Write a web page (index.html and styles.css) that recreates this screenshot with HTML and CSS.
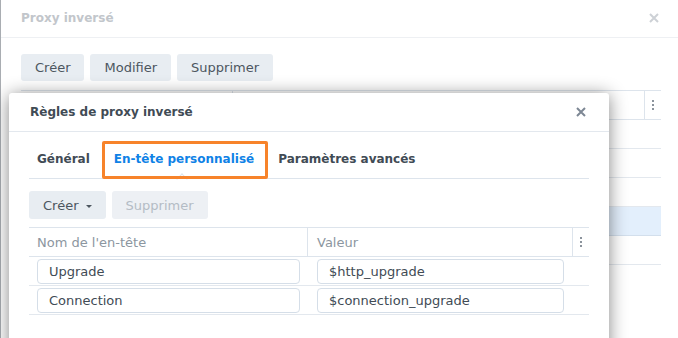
FILE: index.html
```html
<!DOCTYPE html>
<html lang="fr">
<head>
  <meta charset="UTF-8">
  <meta name="viewport" content="width=device-width, initial-scale=1.0">
  <title>Proxy inversé</title>
  <link rel="stylesheet" href="styles.css">
</head>
<body>

  <div class="screen">
    <!-- Background window -->
    <div class="window">
      <div class="win-header">
        <span class="win-title">Proxy inversé</span>
        <svg class="win-close" width="10" height="10" viewBox="0 0 10 10"><path d="M1 1L9 9M9 1L1 9" stroke="#cdd1d6" stroke-width="2"/></svg>
      </div>
      <div class="win-toolbar">
        <button class="btn">Créer</button>
        <button class="btn">Modifier</button>
        <button class="btn">Supprimer</button>
      </div>
      <div class="list">
        <div class="list-head">
          <div class="list-col first"></div>
          <div class="list-col second"></div>
          <div class="list-menu"><span class="dots"><i></i><i></i><i></i></span></div>
        </div>
        <div class="list-row"></div>
        <div class="list-row"></div>
        <div class="list-row"></div>
        <div class="list-row selected"></div>
        <div class="list-row"></div>
      </div>
    </div>

    <!-- Rules dialog -->
    <div class="dialog">
      <div class="dlg-header">
        <span class="dlg-title">Règles de proxy inversé</span>
        <svg class="dlg-close" width="10" height="10" viewBox="0 0 10 10"><path d="M1 1L9 9M9 1L1 9" stroke="#7d8794" stroke-width="2"/></svg>
      </div>
      <div class="dlg-body">
        <div class="tabs">
          <span class="tab">Général</span>
          <span class="tab active">En-tête personnalisé</span>
          <span class="tab">Paramètres avancés</span>
        </div>

        <div class="toolbar">
          <button class="btn">Créer <span class="caret"></span></button>
          <button class="btn" disabled>Supprimer</button>
        </div>

        <div class="grid">
          <div class="cell head">Nom de l'en-tête</div>
          <div class="cell head">Valeur</div>
          <div class="cell head menu"><span class="dots"><i></i><i></i><i></i></span></div>

          <div class="cell"><input class="field" type="text" value="Upgrade"></div>
          <div class="cell"><input class="field" type="text" value="$http_upgrade"></div>
          <div class="cell"></div>

          <div class="cell"><input class="field" type="text" value="Connection"></div>
          <div class="cell"><input class="field" type="text" value="$connection_upgrade"></div>
          <div class="cell"></div>
        </div>
      </div>
    </div>
  </div>

</body>
</html>
```

FILE: styles.css
```css
/* styles.css */
body {
  margin: 0;
  font-family: "DejaVu Sans", Verdana, sans-serif;
  font-size: 13px;
  color: #414b55;
  background-color: #fff;
}

.screen {
  position: relative;
  width: 678px;
  height: 338px;
  overflow: hidden;
}

/* background window */
.window {
  height: 338px;
  border-left: 1px solid #a9adb2;
  background-color: #fff;
}

.win-header {
  display: flex;
  justify-content: space-between;
  align-items: center;
  height: 29px;
  padding: 3px 19px 5px 20px;
  border-bottom: 1px solid #eef0f3;
}

.win-title {
  font-size: 12px;
  font-weight: bold;
  color: #c2c6cb;
}

.btn {
  height: 27px;
  padding: 0 14px;
  border: none;
  border-radius: 3px;
  background-color: #e8edf2;
  font-family: inherit;
  font-size: 13px;
  color: #4c565f;
}

.win-toolbar {
  display: flex;
  gap: 6px;
  padding: 16px 0 0 20px;
}

.list {
  margin: 9px 17px 0 20px;
  border-top: 1px solid #dde4ec;
}

.list-head {
  display: flex;
  height: 28px;
  border-bottom: 1px solid #dde4ec;
}

.list-col.first {
  width: 211px;
  border-right: 1px solid #dde4ec;
}

.list-col.second {
  flex: 1;
  border-right: 1px solid #dde4ec;
}

.list-menu {
  width: 16px;
  display: flex;
  align-items: center;
  justify-content: center;
}

.list-row {
  height: 28px;
  border-bottom: 1px solid #e3e8ee;
}

.list-row.selected {
  background-color: #e3effc;
  border-bottom-color: #d3dfec;
}

.dots {
  display: flex;
  flex-direction: column;
  gap: 2px;
}

.dots i {
  display: block;
  width: 2px;
  height: 2px;
  background-color: #8b939c;
}

/* dialog */
.dialog {
  position: absolute;
  left: 9px;
  top: 93px;
  width: 600px;
  height: 270px;
  background-color: #fff;
  border-radius: 3px 3px 0 0;
  box-shadow: 0 2px 18px rgba(0, 0, 0, 0.48);
}

.dlg-header {
  display: flex;
  justify-content: space-between;
  align-items: center;
  height: 38px;
  padding: 0 23px 0 21px;
  border-bottom: 1px solid #e3e8ee;
}

.dlg-title {
  font-size: 12px;
  font-weight: bold;
  color: #414b55;
}

.dlg-body {
  padding: 9px 20px 0 20px;
}

.tabs {
  display: flex;
  gap: 24px;
  height: 37px;
  padding-left: 8px;
  border-bottom: 1px solid #dde4ec;
}

.tab {
  position: relative;
  line-height: 37px;
  font-size: 12px;
  font-weight: bold;
  color: #414b55;
}

.tab.active {
  color: #0f82e6;
}

/* small notch under the active tab */
.tab.active::before {
  content: "";
  position: absolute;
  left: 64px;
  bottom: -5px;
  width: 7px;
  height: 7px;
  background-color: #fff;
  border-top: 1px solid #dde4ec;
  border-left: 1px solid #dde4ec;
  transform: rotate(45deg);
}

/* orange highlight around the active tab */
.tab.active::after {
  content: "";
  position: absolute;
  left: -12px;
  right: -14px;
  top: 0;
  bottom: -1px;
  border: 3px solid #f7832a;
  border-radius: 2px;
}

.toolbar {
  display: flex;
  gap: 6px;
  margin-top: 12px;
}

.toolbar .btn {
  height: 28px;
}

.btn:disabled {
  background-color: #edf0f4;
  color: #b4bcc5;
}

.caret {
  display: inline-block;
  margin-left: 3px;
  vertical-align: middle;
  border-left: 3px solid transparent;
  border-right: 3px solid transparent;
  border-top: 3px solid #4c565f;
}

.grid {
  display: grid;
  grid-template-columns: 279px 265px 16px;
  margin-top: 8px;
  border-top: 1px solid #dde4ec;
}

.cell {
  display: flex;
  align-items: center;
  height: 28px;
  border-bottom: 1px solid #e3e8ee;
  padding: 0 8px;
}

.cell:nth-child(3n+2) {
  padding: 0 9px;
}

.cell:nth-child(3n) {
  padding: 0;
}

.cell.head {
  color: #8c96a0;
  border-bottom-color: #dde4ec;
}

.cell.head:not(.menu) {
  border-right: 1px solid #dde4ec;
}

.cell.menu {
  justify-content: center;
}

.field {
  box-sizing: border-box;
  width: 100%;
  height: 25px;
  padding: 0 11px;
  border: 1px solid #d5dee8;
  border-radius: 4px;
  font-family: inherit;
  font-size: 13px;
  color: #414b55;
  outline: none;
}
```
